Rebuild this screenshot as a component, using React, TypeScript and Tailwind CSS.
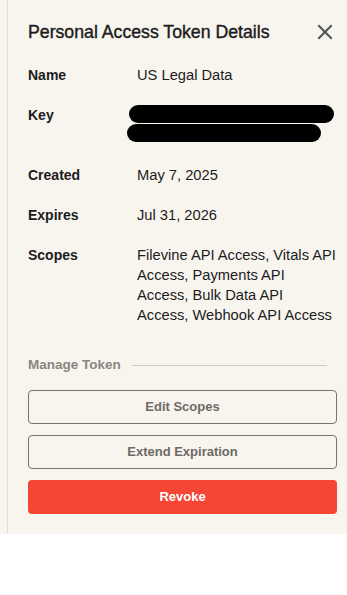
import React from "react";

function Redaction() {
  return (
    <svg width="212" height="40" viewBox="0 0 212 40" className="block">
      <line x1="11" y1="9" x2="198" y2="9" stroke="#000" strokeWidth="18" strokeLinecap="round" />
      <line x1="9" y1="28" x2="185" y2="28" stroke="#000" strokeWidth="18" strokeLinecap="round" />
    </svg>
  );
}

function Row({ label, children }: { label: string; children: React.ReactNode }) {
  return (
    <div className="flex">
      <div className="w-[109px] shrink-0 text-[14px] leading-[20px] font-bold text-[#1c1c1c]">{label}</div>
      <div className="flex-1 text-[14.7px] leading-[20px] text-[#1c1c1c]">{children}</div>
    </div>
  );
}

export default function App() {
  return (
    <div className="w-[347px] bg-white" style={{ fontFamily: '"Liberation Sans", Arial, sans-serif' }}>
      <div className="bg-[#f8f5ef] pl-[7px] h-[534px]">
        <div className="border-l border-[#e0dcd4] h-full pl-[20px] pr-[10px] pt-[20px]">
          <div className="flex items-center justify-between h-[24px]">
            <h2 className="text-[17.7px] font-normal [-webkit-text-stroke:0.4px_#1c1c1c] text-[#1c1c1c] leading-[24px]">
              Personal Access Token Details
            </h2>
            <button className="mr-[4px] text-[#4a5359]">
              <svg width="16" height="16" viewBox="0 0 16 16" fill="none" stroke="currentColor" strokeWidth="2" strokeLinecap="square">
                <path d="M2 2 L14 14 M14 2 L2 14" />
              </svg>
            </button>
          </div>
          <div className="flex flex-col gap-[20px] mt-[21px]">
            <Row label="Name">US Legal Data</Row>
            <Row label="Key">
              <div className="-ml-[10px]">
                <Redaction />
              </div>
            </Row>
            <Row label="Created">May 7, 2025</Row>
            <Row label="Expires">Jul 31, 2026</Row>
            <Row label="Scopes">
              Filevine API Access, Vitals API Access, Payments API Access, Bulk Data API Access, Webhook API Access
            </Row>
          </div>
          <div className="flex items-center gap-[11px] mt-[30px] h-[20px]">
            <span className="text-[13.5px] font-bold text-[#8a8682]">Manage Token</span>
            <div className="flex-1 h-px bg-[#cfcbc5] mr-[10px]" />
          </div>
          <div className="flex flex-col gap-[11px] mt-[15px]">
            <button className="h-[34px] w-full rounded-[4px] border border-[#77736f] text-[13px] font-bold text-[#6e6a66]">
              Edit Scopes
            </button>
            <button className="h-[34px] w-full rounded-[4px] border border-[#77736f] text-[13px] font-bold text-[#6e6a66]">
              Extend Expiration
            </button>
            <button className="h-[34px] w-full rounded-[4px] bg-[#f44535] text-[13px] font-bold text-white">
              Revoke
            </button>
          </div>
        </div>
      </div>
    </div>
  );
}
